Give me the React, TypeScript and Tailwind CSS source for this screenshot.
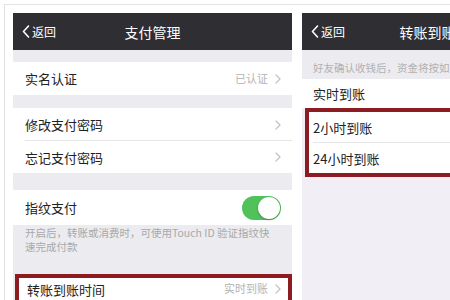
const font = { fontFamily: '"Noto Sans CJK SC", "Noto Sans", sans-serif' };

function Chevron({ color = '#c4c4c8' }: { color?: string }) {
  return (
    <svg width="6" height="10" viewBox="0 0 6 10" fill="none">
      <path d="M1 1l4 4-4 4" stroke={color} strokeWidth="1.3" strokeLinecap="round" strokeLinejoin="round" />
    </svg>
  );
}

function BackButton() {
  return (
    <div className="flex items-center gap-[2px] text-white">
      <svg width="8" height="13" viewBox="0 0 8 13" fill="none">
        <path d="M6.5 1L1.5 6.5l5 5.5" stroke="white" strokeWidth="1.6" strokeLinecap="round" strokeLinejoin="round" />
      </svg>
      <span className="text-[12px] leading-none">返回</span>
    </div>
  );
}

function Header({ title }: { title: string }) {
  return (
    <div className="relative flex h-[37px] shrink-0 items-center bg-[#2f2e33] pl-[9px]">
      <BackButton />
      <span className="absolute inset-x-0 text-center text-[14px] leading-none text-white pointer-events-none">
        {title}
      </span>
    </div>
  );
}

function Row({
  label,
  value,
  chevron = true,
  height,
  divider = false,
}: {
  label: string;
  value?: string;
  chevron?: boolean;
  height: string;
  divider?: boolean;
}) {
  return (
    <div className={`relative flex shrink-0 items-center justify-between bg-white pl-[12px] pr-[11px] ${height}`}>
      <span className="text-[13px] leading-none text-[#222]">{label}</span>
      <div className="flex items-center gap-[7px]">
        {value && <span className="text-[11px] leading-none text-[#b3b3b3]">{value}</span>}
        {chevron && <Chevron />}
      </div>
      {divider && <div className="absolute bottom-0 left-[12px] right-0 h-px bg-[#e6e6e9]" />}
    </div>
  );
}

function Toggle() {
  return (
    <div className="relative h-[24px] w-[39px] rounded-full bg-[#4fc25a]">
      <div className="absolute right-[1px] top-[1px] h-[22px] w-[22px] rounded-full bg-white shadow-[0_1px_2px_rgba(0,0,0,0.3)]" />
    </div>
  );
}

function PaymentPanel() {
  return (
    <div className="flex min-h-[300px] w-[279px] shrink-0 flex-col bg-[#ececf0]">
      <Header title="支付管理" />
      <div className="h-[12px] shrink-0" />
      <Row label="实名认证" value="已认证" height="h-[33px]" />
      <div className="h-[13px] shrink-0" />
      <Row label="修改支付密码" height="h-[33px]" divider />
      <Row label="忘记支付密码" height="h-[32px]" />
      <div className="h-[17px] shrink-0" />
      <div className="flex h-[35px] shrink-0 items-center justify-between bg-white pl-[12px] pr-[11px]">
        <span className="text-[13px] leading-none text-[#222]">指纹支付</span>
        <Toggle />
      </div>
      <div className="h-[49px] shrink-0 pl-[12px] pt-[1px] text-[10.5px] leading-[14px] text-[#a8a8a8]">
        <div className="whitespace-nowrap">开启后，转账或消费时，可使用Touch ID 验证指纹快</div>
        <div className="whitespace-nowrap">速完成付款</div>
      </div>
      <div className="ml-[2px] flex h-[40px] shrink-0 items-start justify-between border-[4px] border-b-0 border-[#8d1b22] bg-white pl-[8px] pr-[7px] pt-[5px]">
        <span className="text-[13px] leading-none text-[#222]">转账到账时间</span>
        <div className="flex items-center gap-[7px]">
          <span className="text-[11px] leading-none text-[#b3b3b3]">实时到账</span>
          <Chevron />
        </div>
      </div>
    </div>
  );
}

function TransferPanel() {
  return (
    <div className="flex min-h-[300px] w-[279px] shrink-0 flex-col bg-[#f2eef6]">
      <Header title="转账到账时间" />
      <div className="flex h-[29px] items-center bg-[#ececf0] pl-[11px] pt-[7px]">
        <span className="whitespace-nowrap text-[10.5px] leading-none text-[#b0b0b0]">
          好友确认收钱后，资金将按如下时间到账
        </span>
      </div>
      <div className="flex h-[29px] items-center bg-white pl-[11px]">
        <span className="text-[13px] leading-none text-[#222]">实时到账</span>
      </div>
      <div className="ml-[3px] mr-[-4px] flex flex-col border-[4px] border-[#8d1b22] bg-white">
        <div className="relative flex h-[31px] items-center pl-[4px]">
          <span className="text-[13px] leading-none text-[#222]">2小时到账</span>
          <div className="absolute bottom-0 left-[4px] right-0 h-px bg-[#e6e6e9]" />
        </div>
        <div className="flex h-[30px] items-center pl-[4px]">
          <span className="text-[13px] leading-none text-[#222]">24小时到账</span>
        </div>
      </div>
    </div>
  );
}

export default function App() {
  return (
    <div className="h-[300px] w-[450px] overflow-hidden bg-white pl-[4px] pt-[4px]" style={font}>
      <div className="border-l border-t border-[#e2e2e2] pl-[8px] pt-[8px]">
        <div className="flex items-start gap-[10px]">
          <PaymentPanel />
          <TransferPanel />
        </div>
      </div>
    </div>
  );
}
